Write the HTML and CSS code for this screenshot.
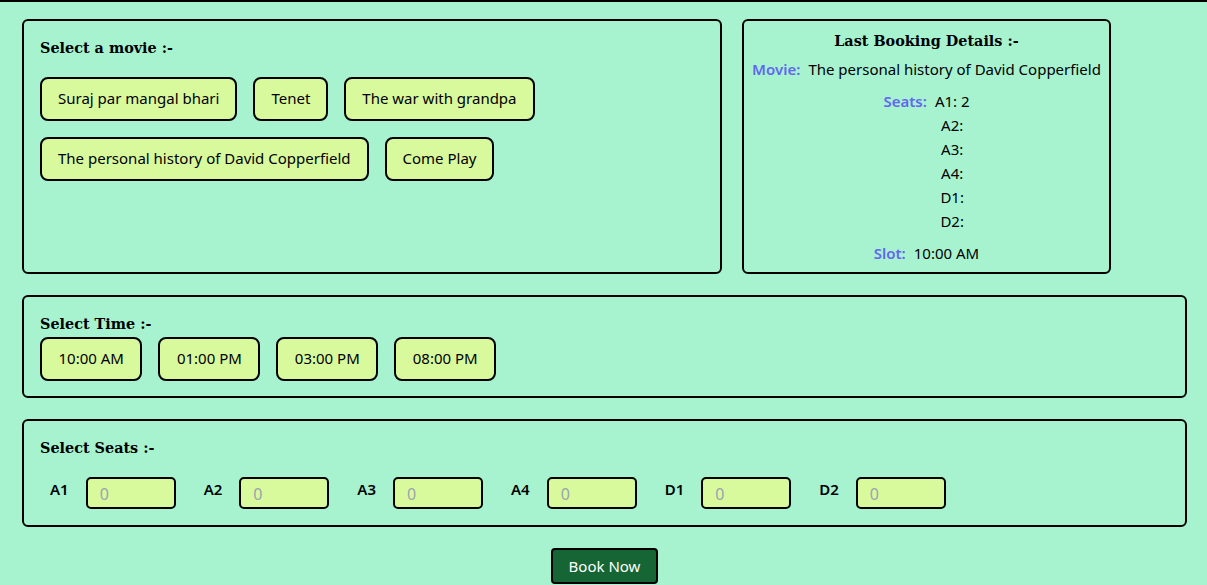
FILE: index.html
```html
<!DOCTYPE html>
<html>
<head>
<meta charset="utf-8">
<link rel="stylesheet" href="styles.css">
</head>
<body>
<div class="page">
  <div class="top-row">
    <section class="box movie-box">
      <h2 class="heading">Select a movie :-</h2>
      <div class="choices movie-choices">
        <button class="choice">Suraj par mangal bhari</button>
        <button class="choice">Tenet</button>
        <button class="choice">The war with grandpa</button>
        <button class="choice">The personal history of David Copperfield</button>
        <button class="choice">Come Play</button>
      </div>
    </section>
    <section class="box booking-box">
      <h2 class="heading booking-heading">Last Booking Details :-</h2>
      <div class="detail"><span class="detail-label">Movie:</span><span>The personal history of David Copperfield</span></div>
      <div class="detail seats-detail">
        <span class="detail-label">Seats:</span>
        <div class="seat-list">
          <div>A1: 2</div>
          <div>A2:</div>
          <div>A3:</div>
          <div>A4:</div>
          <div>D1:</div>
          <div>D2:</div>
        </div>
      </div>
      <div class="detail slot-detail"><span class="detail-label">Slot:</span><span>10:00 AM</span></div>
    </section>
  </div>

  <section class="box time-box">
    <h2 class="heading">Select Time :-</h2>
    <div class="choices">
      <button class="choice">10:00 AM</button>
      <button class="choice">01:00 PM</button>
      <button class="choice">03:00 PM</button>
      <button class="choice">08:00 PM</button>
    </div>
  </section>

  <section class="box seats-box">
    <h2 class="heading">Select Seats :-</h2>
    <div class="seat-row">
      <label class="seat"><span class="seat-name">A1</span><input class="seat-input" type="number" placeholder="0"></label>
      <label class="seat"><span class="seat-name">A2</span><input class="seat-input" type="number" placeholder="0"></label>
      <label class="seat"><span class="seat-name">A3</span><input class="seat-input" type="number" placeholder="0"></label>
      <label class="seat"><span class="seat-name">A4</span><input class="seat-input" type="number" placeholder="0"></label>
      <label class="seat"><span class="seat-name">D1</span><input class="seat-input" type="number" placeholder="0"></label>
      <label class="seat"><span class="seat-name">D2</span><input class="seat-input" type="number" placeholder="0"></label>
    </div>
  </section>

  <div class="actions">
    <button class="book-btn">Book Now</button>
  </div>
</div>
</body>
</html>
```

FILE: styles.css
```css
* {
  box-sizing: border-box;
}

html, body {
  margin: 0;
  background: #a7f3d0;
}

body {
  font-family: "Noto Sans", "Open Sans", sans-serif;
  font-size: 15px;
  color: #000;
  height: 585px;
  overflow: hidden;
}

.page {
  border-top: 2px solid #000;
  padding: 17px 20px 0 22px;
  display: flex;
  flex-direction: column;
  gap: 21px;
}

.top-row {
  display: flex;
  gap: 20px;
  align-items: stretch;
  height: 255px;
}

.box {
  border: 2px solid #000;
  border-radius: 6px;
  padding: 17px 16px 16px;
}

.heading {
  margin: 0;
  font-family: "DejaVu Serif", "Liberation Serif", serif;
  font-weight: bold;
  font-size: 14.4px;
  line-height: 20px;
}

.movie-box {
  width: 700px;
}

.movie-box .heading {
  margin-bottom: 19px;
}

.choices {
  display: flex;
  flex-wrap: wrap;
  gap: 16px;
}

.time-box {
  padding-bottom: 15px;
}

.time-box .heading {
  margin-bottom: 3px;
}

.choice {
  font-family: inherit;
  font-size: 15px;
  line-height: 21px;
  color: #000;
  background: #d9f99d;
  border: 2px solid #000;
  border-radius: 8px;
  padding: 9px 16px 10px;
  cursor: pointer;
}

.time-box .choice {
  padding-left: 16.5px;
  padding-right: 16.5px;
}

.booking-box {
  width: 369px;
  padding: 10px 8px 8px;
  text-align: center;
}

.booking-heading {
  margin-bottom: 6px;
}

.detail {
  display: flex;
  justify-content: center;
  gap: 8px;
  line-height: 24px;
}

.detail-label {
  color: #6366f1;
  font-weight: 600;
}

.seats-detail {
  margin-top: 8px;
}

.seat-list {
  display: flex;
  flex-direction: column;
  align-items: center;
}

.slot-detail {
  margin-top: 8px;
}

.seats-box {
  padding-bottom: 16px;
}

.seats-box .heading {
  margin-bottom: 19px;
}

.seat-row {
  display: flex;
  gap: 28px;
  padding-left: 10px;
}

.seat {
  display: flex;
  align-items: center;
  gap: 17px;
}

.seat-name {
  font-weight: 600;
  font-size: 15px;
  min-width: 16px;
  position: relative;
  top: -4px;
}

.seat-input {
  width: 90px;
  height: 32px;
  border: 2px solid #000;
  border-radius: 5px;
  background: #d9f99d;
  padding: 2px 12px 0;
  font-family: inherit;
  font-size: 16px;
  -moz-appearance: textfield;
}

.seat-input::placeholder {
  color: #9ca3af;
}

.seat-input::-webkit-outer-spin-button,
.seat-input::-webkit-inner-spin-button {
  -webkit-appearance: none;
  margin: 0;
}

.actions {
  display: flex;
  justify-content: center;
}

.book-btn {
  font-family: inherit;
  font-size: 15px;
  line-height: 20px;
  color: #fff;
  background: #166534;
  border: 2px solid #000;
  border-radius: 4px;
  padding: 6px 16px;
  cursor: pointer;
}
```
